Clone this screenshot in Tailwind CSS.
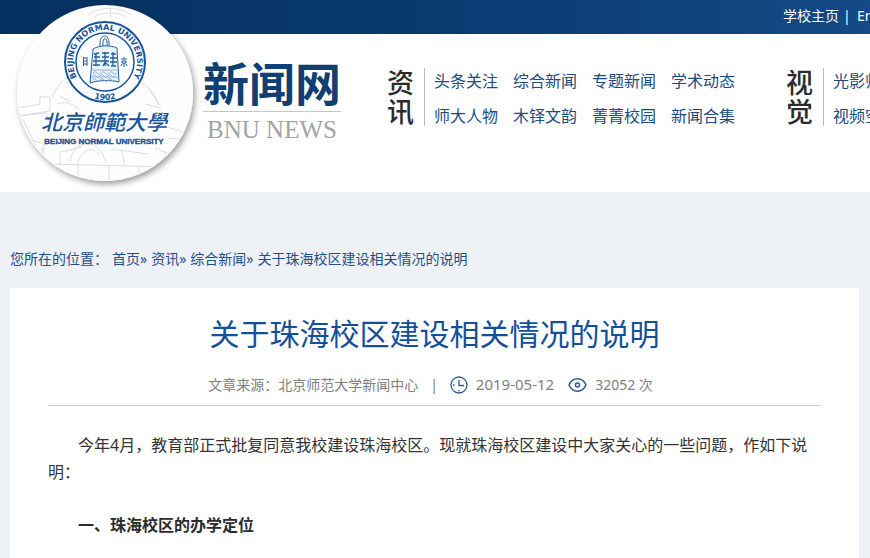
<!DOCTYPE html>
<html lang="zh-CN">
<head>
<meta charset="utf-8">
<meta name="viewport" content="width=device-width, initial-scale=1">
<title>关于珠海校区建设相关情况的说明</title>
<script src="https://cdn.jsdelivr.net/npm/@tailwindcss/browser@4"></script>
</head>
<body class="min-h-screen overflow-x-hidden bg-[#eef1f6] font-['Noto_Sans','Noto_Sans_CJK_SC',sans-serif] text-[#333]">
<header class="relative overflow-hidden bg-white">
  <div class="h-[34px] bg-linear-to-r from-[#05305f] via-[#0a3a70] to-[#134a87]">
    <nav aria-label="顶部" class="flex h-8 min-w-[905px] items-center justify-end text-sm whitespace-nowrap text-white">
      <a href="#">学校主页</a><span class="w-[18px] pl-1">|</span><a href="#" class="w-12">English</a>
    </nav>
  </div>
  <a href="#" aria-label="北京师范大学" class="absolute top-0 left-0">
    <svg width="210" height="192" viewBox="0 0 210 192" fill="none">
      <defs>
        <filter id="shadow" x="-10%" y="-10%" width="125%" height="125%"><feDropShadow dx="2" dy="3" stdDeviation="3" flood-color="#000" flood-opacity=".4"/></filter>
        <clipPath id="disc"><circle cx="105" cy="93" r="87"/></clipPath>
        <path id="arcTop" d="M85 87A32 32 0 1 1 125 87"/>
        <path id="arcBottom" d="M67 62A38 38 0 0 0 143 62"/>
      </defs>
      <circle cx="105" cy="93" r="88" fill="#fefefe" filter="url(#shadow)"/>
      <g clip-path="url(#disc)" stroke="#dcdce0" stroke-width="1">
        <path d="M88 15c8-8 34-10 43 1M94 17c8-5 24-6 32 0M110 9l1 9M18 108l22-4v-7h10v14l-32 5M20 116l26-3 4 10M52 98c6-14 12-20 19-23M57 104c8-3 14-1 22 5M60 96l10 6M148 88l12 17M140 82c10 5 16 14 18 23M145 104l16 4M164 126l25 8M168 138l20 2M42 148v14M60 153v12M70 162c3-20 22-24 32-9l4 10M78 162c3-12 14-17 22-7M48 164l124 3M78 163v16M109 165v16M139 166v12M122 150l2 14M30 140l14 4v18M22 118l14 28M155 148l12 5v13M60 152l22-5M110 149l38 5"/>
      </g>
      <circle cx="105" cy="62" r="40" stroke="#17549a" stroke-width="2" fill="#fdfeff"/>
      <circle cx="105" cy="62" r="29" stroke="#17549a" stroke-width="1.500"/>
      <g fill="#17549a" font-family="DejaVu Sans, sans-serif" font-weight="bold">
        <text font-size="8"><textPath href="#arcTop" startOffset="50%" text-anchor="middle">BEIJING NORMAL UNIVERSITY</textPath></text>
        <text font-size="8"><textPath href="#arcBottom" startOffset="50%" text-anchor="middle">1902</textPath></text>
      </g>
      <g stroke="#2560a0" stroke-width="1">
        <path d="M100 47v-5c1-8 8-8 9 0v5M103 46v-5c1-3 3-3 4 0v5"/>
        <path d="M93 49c6-4 18-4 24-1l2 34c-8-2-20-2-29 1z" fill="#eaf2fa"/>
        <path d="M94 54l5-1M94 57h6M96 53v13M93 61h8M93 65h7M102 53h7M105 52v14M102 57h7M101 61h8M103 66l2-4 4 4M111 54h5M113 52v14M110 58h7M110 62h7M111 66h5" stroke-width="1.300"/>
        <path d="M92 70h26M91 77h27M93 73q2-3 4 0t4 0 4 0 4 0 4 0 4 0M92 76q2-3 4 0t4 0 4 0 4 0 4 0 4 0M92 80q2-3 4 0t4 0 4 0 4 0 4 0 4 0" stroke="#83a8cf" stroke-width=".8"/>
        <path d="M83.500 57v9M87 57v9M84 58h3M84 61h3M84 64h3M124 57v2M121 59h6M122 61h4v2h-4zM124 63v4M122 64l-1 2M126 64l1 2"/>
      </g>
      <g fill="#17549a">
        <text x="41" y="130" font-size="21" font-style="italic" font-weight="500" font-family="Noto Sans CJK TC, sans-serif">北京師範大學</text>
        <text x="104" y="144" text-anchor="middle" font-size="8" font-weight="bold" stroke="#17549a" stroke-width=".4" font-family="Liberation Sans, Arial, sans-serif">BEIJING NORMAL UNIVERSITY</text>
      </g>
    </svg>
  </a>
  <div class="flex h-[158px] items-start pt-[26px] pl-[203px] whitespace-nowrap">
    <a href="#" class="w-[138px] shrink-0 text-center">
      <span class="block h-[52px] border-b border-[#c6c6c6] text-[46px] leading-[46px] font-bold text-[#123f72]">新闻网</span>
      <span class="block pt-1 font-['Liberation_Serif',serif] text-[25px] leading-7 text-[#a3a3a3]">BNU NEWS</span>
    </a>
    <nav aria-label="资讯" class="ml-[46px] flex shrink-0 pt-2">
      <h2 class="h-[58px] w-[38px] border-r border-[#bbb] pr-[9px] text-[27px] leading-[29px] font-medium break-all whitespace-normal text-[#2b2b2b]">资讯</h2>
      <div class="-mt-1 ml-[9px] grid grid-cols-4 gap-x-[15px] text-base leading-[35px] text-[#1d4b7f]">
        <a href="#">头条关注</a><a href="#">综合新闻</a><a href="#">专题新闻</a><a href="#">学术动态</a>
        <a href="#">师大人物</a><a href="#">木铎文韵</a><a href="#">菁菁校园</a><a href="#">新闻合集</a>
      </div>
    </nav>
    <nav aria-label="视觉" class="ml-[51px] flex shrink-0 pt-2">
      <h2 class="h-[58px] w-[38px] border-r border-[#bbb] pr-[9px] text-[27px] leading-[29px] font-medium break-all whitespace-normal text-[#2b2b2b]">视觉</h2>
      <div class="-mt-1 ml-[9px] grid text-base leading-[35px] text-[#1d4b7f]">
        <a href="#">光影师大</a><a href="#">视频空间</a>
      </div>
    </nav>
  </div>
</header>

<main class="pr-[11px] pl-[10px]">
  <nav aria-label="您所在的位置" class="flex h-24 items-end pb-[19px] text-sm leading-5 text-[#1d4f8a]">
    <span class="mr-1">您所在的位置：</span><a href="#">首页</a><span class="mr-1">»</span><a href="#">资讯</a><span class="mr-1">»</span><a href="#">综合新闻</a><span class="mr-1">»</span><a href="#">关于珠海校区建设相关情况的说明</a>
  </nav>
  <article class="min-h-[270px] bg-white px-[38px] pt-6">
    <h1 class="text-center text-3xl leading-[44px] text-[#14509a]">关于珠海校区建设相关情况的说明</h1>
    <div class="mt-2 flex h-[42px] items-center justify-center border-b border-[#ccc] pr-2 text-sm text-[#808080]">
      <span>文章来源：北京师范大学新闻中心</span>
      <span class="mx-3">|</span>
      <svg class="mr-2" width="18" height="18" viewBox="0 0 18 18" fill="none" stroke="#285c94" stroke-width="1.300" aria-hidden="true"><circle cx="9" cy="9" r="8"/><path d="M9 4v5.500h5M9 14v1.500M3 9h1.500"/></svg>
      <time datetime="2019-05-12" class="text-[15px]">2019-05-12</time>
      <svg class="mr-2 ml-[14px]" width="19" height="16" viewBox="0 0 19 16" fill="none" stroke="#285c94" stroke-width="1.500" aria-hidden="true"><path d="M1 8C4.500-.2 14.500-.2 18 8 14.500 16.200 4.500 16.200 1 8z"/><circle cx="9.500" cy="8" r="2"/></svg>
      <span>32052 次</span>
    </div>
    <div class="pt-[26px] text-base leading-[27px]">
      <p class="indent-[30px]">今年4月，教育部正式批复同意我校建设珠海校区。现就珠海校区建设中大家关心的一些问题，作如下说明：</p>
      <h2 class="mt-[26px] indent-[30px] font-bold text-[#2b2b2b]">一、珠海校区的办学定位</h2>
    </div>
  </article>
</main>
</body>
</html>
